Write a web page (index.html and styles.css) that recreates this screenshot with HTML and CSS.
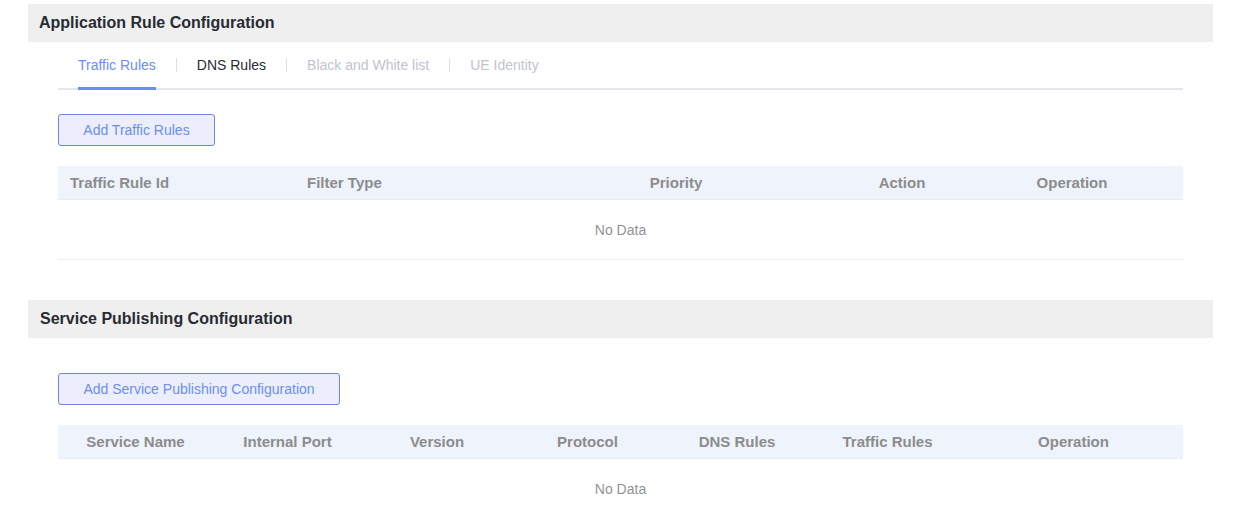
FILE: index.html
```html
<!DOCTYPE html>
<html>
<head>
<meta charset="utf-8">
<link rel="stylesheet" href="styles.css">
</head>
<body>
<div class="page">
  <section class="section">
    <div class="section-head">Application Rule Configuration</div>
    <div class="section-body">
      <div class="tabs">
        <div class="tab active">Traffic Rules</div>
        <div class="tab">DNS Rules</div>
        <div class="tab disabled">Black and White list</div>
        <div class="tab disabled">UE Identity</div>
      </div>
      <button class="btn btn-first">Add Traffic Rules</button>
      <div class="table t1">
        <div class="thead">
          <div class="c left">Traffic Rule Id</div>
          <div class="c left">Filter Type</div>
          <div class="c">Priority</div>
          <div class="c">Action</div>
          <div class="c">Operation</div>
        </div>
        <div class="empty">No Data</div>
      </div>
    </div>
  </section>
  <section class="section s2">
    <div class="section-head">Service Publishing Configuration</div>
    <div class="section-body">
      <button class="btn btn-second">Add Service Publishing Configuration</button>
      <div class="table t2">
        <div class="thead">
          <div class="c">Service Name</div>
          <div class="c">Internal Port</div>
          <div class="c">Version</div>
          <div class="c">Protocol</div>
          <div class="c">DNS Rules</div>
          <div class="c">Traffic Rules</div>
          <div class="c">Operation</div>
        </div>
        <div class="empty">No Data</div>
      </div>
    </div>
  </section>
</div>
</body>
</html>
```
FILE: styles.css
```css
* { box-sizing: border-box; }
html, body { margin: 0; padding: 0; background: #fff; }
body {
  font-family: "Liberation Sans", Arial, sans-serif;
  font-size: 14px;
  color: #282b33;
}
.page { padding: 4px 29px 0 28px; }
.section-head {
  height: 38px;
  line-height: 37px;
  background: #efefef;
  padding-left: 11px;
  font-size: 16px;
  font-weight: bold;
  color: #282b33;
}
.s2 .section-head { padding-left: 12px; }
.section-body { padding: 0 30px; }
.tabs {
  display: flex;
  padding-left: 20px;
  border-bottom: 2px solid #e4e7ed;
  height: 48px;
}
.tab {
  position: relative;
  height: 46px;
  line-height: 46px;
  padding: 0 20px 0 21px;
  color: #282b33;
}
.tab:first-child { padding-left: 0; }
.tab + .tab::before {
  content: "";
  position: absolute;
  left: 0;
  top: 16px;
  width: 1px;
  height: 14px;
  background: #dcdfe6;
}
.tab.active { color: #6b8ef0; }
.tab.active::after {
  content: "";
  position: absolute;
  left: 0;
  right: 20px;
  bottom: -2px;
  height: 3px;
  background: #6b8ef0;
}
.tab.disabled { color: #c0c4cc; }
.btn {
  display: block;
  height: 32px;
  padding: 0;
  background: #eceffb;
  border: 1px solid #6b86e8;
  border-radius: 3px;
  color: #6b8ef0;
  font-family: inherit;
  font-size: 14px;
}
.btn-first { margin-top: 24px; width: 157px; }
.btn-second { margin-top: 35px; width: 282px; }
.table { margin-top: 20px; }
.thead {
  display: grid;
  height: 34px;
  background: #eef3fc;
  border-bottom: 1px solid #e8ecf4;
  align-items: center;
  font-weight: bold;
  font-size: 15px;
  color: #8c8c8c;
}
.t1 .thead { grid-template-columns: 237px 214px 334px 118px 1fr; }
.t2 .thead { grid-template-columns: 155px 149px 150px 151px 148px 153px 1fr; }
.c { text-align: center; }
.c.left { text-align: left; padding-left: 12px; }
.empty {
  height: 60px;
  line-height: 60px;
  text-align: center;
  color: #909399;
  border-bottom: 1px solid #ebeef5;
}
.s2 { margin-top: 40px; }
```
